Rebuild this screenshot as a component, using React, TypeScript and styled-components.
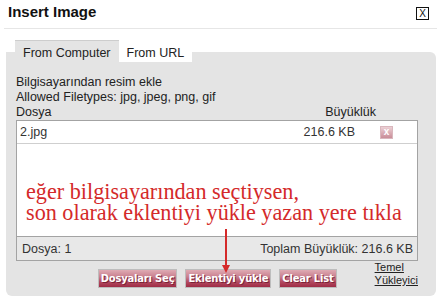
import styled, { createGlobalStyle } from "styled-components";

const GlobalStyle = createGlobalStyle`
  html, body {
    margin: 0;
    padding: 0;
    background: #fff;
  }
  body {
    font-family: "Liberation Sans", Arial, sans-serif;
    color: #222;
    overflow: hidden;
  }
`;

export default function App() {
  return (
    <>
      <GlobalStyle />
      <Dialog>
        <TitleBar>
          <Title>Insert Image</Title>
          <CloseBox>X</CloseBox>
        </TitleBar>

        <Tabs>
          <Tab active>From Computer</Tab>
          <Tab>From URL</Tab>
        </Tabs>

        <Panel>
          <Info>
            <div>Bilgisayarından resim ekle</div>
            <div>Allowed Filetypes: jpg, jpeg, png, gif</div>
            <HeaderRow>
              <span>Dosya</span>
              <span>Büyüklük</span>
            </HeaderRow>
          </Info>

          <FileList>
            <FileRow>
              <FileName>2.jpg</FileName>
              <FileSize>216.6 KB</FileSize>
              <DeleteIcon>x</DeleteIcon>
            </FileRow>
            <ListBody>
              <NoteLine>eğer bilgisayarından seçtiysen,</NoteLine>
              <NoteLine>son olarak eklentiyi yükle yazan yere tıkla</NoteLine>
            </ListBody>
            <ListFooter>
              <span>Dosya: 1</span>
              <span>Toplam Büyüklük: 216.6 KB</span>
            </ListFooter>
          </FileList>

          <Actions>
            <Button>Dosyaları Seç</Button>
            <Button>Eklentiyi yükle</Button>
            <Button>Clear List</Button>
            <BasicLink href="#">
              Temel
              <br />
              Yükleyici
            </BasicLink>
          </Actions>

          <Arrow width="10" height="44" viewBox="0 0 10 44">
            <line x1="5" y1="0" x2="5" y2="37" stroke="#d42a2a" strokeWidth="2" />
            <polygon points="1,36 9,36 5,44" fill="#d42a2a" />
          </Arrow>
        </Panel>
      </Dialog>
    </>
  );
}

const Dialog = styled.div`
  width: 442px;
  height: 299px;
  display: flex;
  flex-direction: column;
  background: #fff;
`;

const TitleBar = styled.div`
  display: flex;
  justify-content: space-between;
  align-items: flex-start;
  height: 28px;
  margin: 0 5px 0 4px;
  padding: 0 8px 0 4px;
  border-bottom: 1px solid #e6e6e6;
`;

const Title = styled.h1`
  margin: 3px 0 0;
  font-size: 15px;
  line-height: 18px;
  font-weight: bold;
  color: #111;
`;

const CloseBox = styled.span`
  margin-top: 7px;
  width: 11px;
  height: 11px;
  border: 1px solid #111;
  font-size: 10px;
  line-height: 11px;
  text-align: center;
  color: #111;
`;

const Tabs = styled.div`
  position: relative;
  z-index: 1;
  display: flex;
  margin: 11px 0 0 15px;
`;

const Tab = styled.div<{ active?: boolean }>`
  height: 18px;
  padding: 3px 8px 0;
  font-size: 12.5px;
  line-height: 18px;
  color: #222;
  background: ${(p) => (p.active ? "#e4e4e4" : "#fff")};
  border-top: 1px solid ${(p) => (p.active ? "#cdcdcd" : "#fff")};
`;

const Panel = styled.div`
  position: relative;
  flex: 1;
  margin: -10px 6px 3px;
  padding: 23px 18px 0 10px;
  background: #e4e4e4;
  border-radius: 0 6px 6px 6px;
`;

const Info = styled.div`
  font-size: 12.5px;
  line-height: 15px;
  color: #222;
`;

const HeaderRow = styled.div`
  display: flex;
  justify-content: space-between;
  padding-right: 42px;
`;

const FileList = styled.div`
  display: flex;
  flex-direction: column;
  border: 1px solid #a3a3a3;
  background: #fff;
`;

const FileRow = styled.div`
  display: flex;
  align-items: center;
  height: 22px;
  padding: 0 24px 0 3px;
  border-bottom: 1px solid #cfcfcf;
  font-size: 12.5px;
  color: #333;
`;

const FileName = styled.span`
  flex: 1;
`;

const FileSize = styled.span``;

const DeleteIcon = styled.span`
  margin-left: 25px;
  width: 11px;
  height: 11px;
  border: 1px solid #d9b7bd;
  background: linear-gradient(#ecd0d5, #c98d98);
  color: #fff;
  font-size: 10px;
  font-weight: bold;
  line-height: 10px;
  text-align: center;
`;

const ListBody = styled.div`
  display: flex;
  flex-direction: column;
  height: 92px;
  padding: 37px 0 0 9px;
  box-sizing: border-box;
`;

const NoteLine = styled.span`
  font-family: "Liberation Serif", "Times New Roman", serif;
  font-size: 22.2px;
  line-height: 21px;
  height: 21px;
  color: #d42a2a;
  white-space: nowrap;
`;

const ListFooter = styled.div`
  display: flex;
  justify-content: space-between;
  align-items: center;
  height: 23px;
  padding: 0 4px 0 5px;
  border-top: 1px solid #a3a3a3;
  background: #e8e8e8;
  font-size: 12.5px;
  color: #333;
`;

const Actions = styled.div`
  display: flex;
  justify-content: flex-end;
  align-items: flex-start;
  gap: 8px;
`;

const Button = styled.button`
  margin-top: 8px;
  height: 19px;
  padding: 0 2px;
  border: 1px solid #bdbdbd;
  background: linear-gradient(#dfaab3 0%, #c9808f 40%, #b24a60 70%, #9f2c46 100%);
  color: #fff;
  font-family: "DejaVu Sans", Verdana, sans-serif;
  font-size: 10px;
  font-weight: bold;
  letter-spacing: -0.2px;
  line-height: 17px;
  text-shadow: 1px 1px 0 #7a2236;
  white-space: nowrap;
`;

const BasicLink = styled.a`
  margin-left: 30px;
  font-size: 11px;
  line-height: 13px;
  color: #222;
  text-decoration: underline;
`;

const Arrow = styled.svg`
  position: absolute;
  left: 215px;
  top: 177px;
`;
